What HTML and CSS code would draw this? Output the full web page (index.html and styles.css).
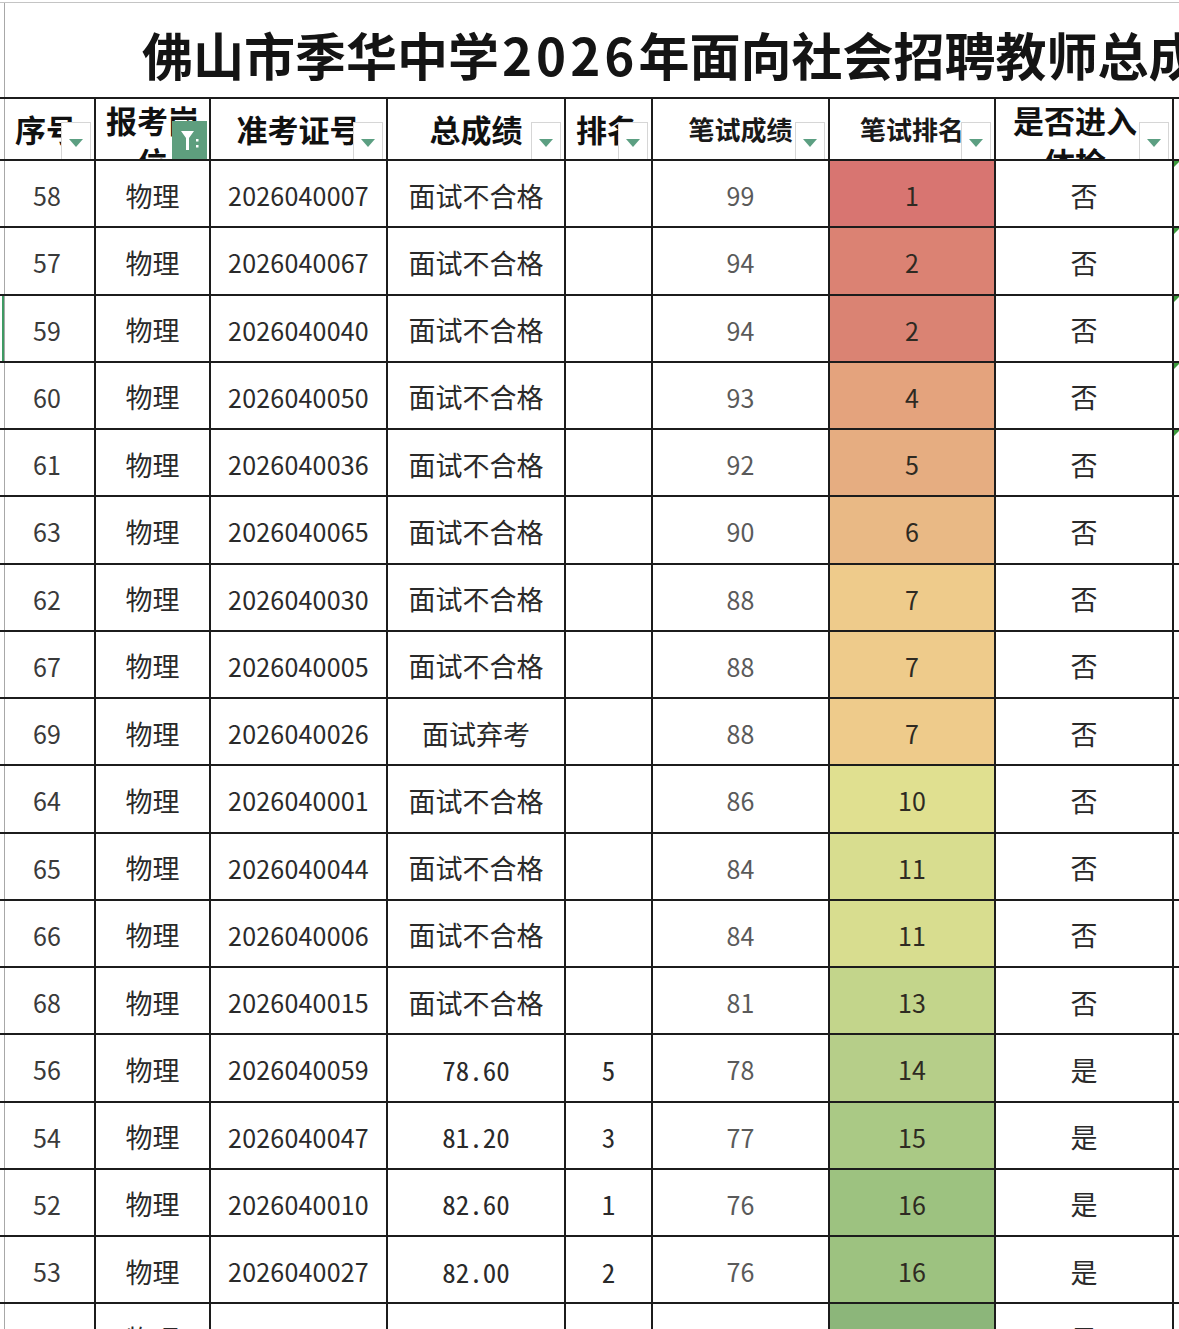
FILE: index.html
```html
<!DOCTYPE html>
<html lang="zh-CN">
<head>
<meta charset="utf-8">
<title>佛山市季华中学2026年面向社会招聘教师总成绩表</title>
<link rel="stylesheet" href="styles.css">
</head>
<body>
<div class="sheet">
  <div class="title-row">
    <div class="title">佛山市季华中学<span class="yr">2026</span>年面向社会招聘教师总成绩表</div>
  </div>
  <div class="grid">
    <div class="hd c1">序号<span class="dd"></span></div>
    <div class="hd top">报考岗位<span class="dd on"><svg width="22" height="28" viewBox="0 0 22 28"><path d="M2 5 H15 L10 12 V24 H7 V12 Z" fill="#fff"/><rect x="17" y="13" width="2.5" height="2.5" fill="#fff"/><rect x="17" y="19" width="2.5" height="2.5" fill="#fff"/></svg></span></div>
    <div class="hd">准考证号<span class="dd"></span></div>
    <div class="hd">总成绩<span class="dd"></span></div>
    <div class="hd hd-left">排名<span class="dd"></span></div>
    <div class="hd sm">笔试成绩<span class="dd"></span></div>
    <div class="hd sm">笔试排名<span class="dd"></span></div>
    <div class="hd top wrap">是否进入体检<span class="dd"></span></div>
    <div class="hd edge"></div>

    <div class="c1 n">58</div><div class="zh">物理</div><div class="id">2026040007</div><div class="zh">面试不合格</div><div></div><div class="n g">99</div><div class="rk" style="background:#d87571">1</div><div class="zh">否</div><div class="edge mark"></div>
    <div class="c1 n">57</div><div class="zh">物理</div><div class="id">2026040067</div><div class="zh">面试不合格</div><div></div><div class="n g">94</div><div class="rk" style="background:#db8273">2</div><div class="zh">否</div><div class="edge mark"></div>
    <div class="c1 n sel">59</div><div class="zh">物理</div><div class="id">2026040040</div><div class="zh">面试不合格</div><div></div><div class="n g">94</div><div class="rk" style="background:#da8373">2</div><div class="zh">否</div><div class="edge mark"></div>
    <div class="c1 n">60</div><div class="zh">物理</div><div class="id">2026040050</div><div class="zh">面试不合格</div><div></div><div class="n g">93</div><div class="rk" style="background:#e4a37d">4</div><div class="zh">否</div><div class="edge mark"></div>
    <div class="c1 n">61</div><div class="zh">物理</div><div class="id">2026040036</div><div class="zh">面试不合格</div><div></div><div class="n g">92</div><div class="rk" style="background:#e6ad81">5</div><div class="zh">否</div><div class="edge mark"></div>
    <div class="c1 n">63</div><div class="zh">物理</div><div class="id">2026040065</div><div class="zh">面试不合格</div><div></div><div class="n g">90</div><div class="rk" style="background:#e9b985">6</div><div class="zh">否</div><div class="edge"></div>
    <div class="c1 n">62</div><div class="zh">物理</div><div class="id">2026040030</div><div class="zh">面试不合格</div><div></div><div class="n g">88</div><div class="rk" style="background:#eecb8b">7</div><div class="zh">否</div><div class="edge"></div>
    <div class="c1 n">67</div><div class="zh">物理</div><div class="id">2026040005</div><div class="zh">面试不合格</div><div></div><div class="n g">88</div><div class="rk" style="background:#eecb8b">7</div><div class="zh">否</div><div class="edge"></div>
    <div class="c1 n">69</div><div class="zh">物理</div><div class="id">2026040026</div><div class="zh">面试弃考</div><div></div><div class="n g">88</div><div class="rk" style="background:#eecb8b">7</div><div class="zh">否</div><div class="edge"></div>
    <div class="c1 n">64</div><div class="zh">物理</div><div class="id">2026040001</div><div class="zh">面试不合格</div><div></div><div class="n g">86</div><div class="rk" style="background:#e0e090">10</div><div class="zh">否</div><div class="edge"></div>
    <div class="c1 n">65</div><div class="zh">物理</div><div class="id">2026040044</div><div class="zh">面试不合格</div><div></div><div class="n g">84</div><div class="rk" style="background:#d8dd8f">11</div><div class="zh">否</div><div class="edge"></div>
    <div class="c1 n">66</div><div class="zh">物理</div><div class="id">2026040006</div><div class="zh">面试不合格</div><div></div><div class="n g">84</div><div class="rk" style="background:#d8dd8f">11</div><div class="zh">否</div><div class="edge"></div>
    <div class="c1 n">68</div><div class="zh">物理</div><div class="id">2026040015</div><div class="zh">面试不合格</div><div></div><div class="n g">81</div><div class="rk" style="background:#c3d58b">13</div><div class="zh">否</div><div class="edge"></div>
    <div class="c1 n">56</div><div class="zh">物理</div><div class="id">2026040059</div><div class="mono">78.60</div><div class="mono">5</div><div class="n g">78</div><div class="rk" style="background:#b6ce89">14</div><div class="zh">是</div><div class="edge"></div>
    <div class="c1 n">54</div><div class="zh">物理</div><div class="id">2026040047</div><div class="mono">81.20</div><div class="mono">3</div><div class="n g">77</div><div class="rk" style="background:#aac985">15</div><div class="zh">是</div><div class="edge"></div>
    <div class="c1 n">52</div><div class="zh">物理</div><div class="id">2026040010</div><div class="mono">82.60</div><div class="mono">1</div><div class="n g">76</div><div class="rk" style="background:#9dc280">16</div><div class="zh">是</div><div class="edge"></div>
    <div class="c1 n">53</div><div class="zh">物理</div><div class="id">2026040027</div><div class="mono">82.00</div><div class="mono">2</div><div class="n g">76</div><div class="rk" style="background:#9dc280">16</div><div class="zh">是</div><div class="edge"></div>
    <div class="c1 n">55</div><div class="zh">物理</div><div class="id">2026040033</div><div class="mono">80.40</div><div class="mono">4</div><div class="n g">75</div><div class="rk" style="background:#8cb67a">18</div><div class="zh">是</div><div class="edge"></div>
  </div>
</div>
</body>
</html>
```

FILE: styles.css
```css
html, body {
  margin: 0;
  padding: 0;
  background: #fff;
  height: 1329px;
  overflow: hidden;
}

.sheet {
  width: 1179px;
  height: 1329px;
  overflow: hidden;
  font-family: "Noto Sans CJK SC", "Noto Sans", sans-serif;
  color: #2a2a2a;
}

.title-row {
  margin-top: 2px;
  height: 95px;
  border-top: 1px solid #c4c4c4;
  box-sizing: border-box;
  background: linear-gradient(to right, #fff 0 4px, #a8a8a8 4px 5px, #fff 5px);
  white-space: nowrap;
  overflow: hidden;
}

.title {
  padding: 20px 0 0 142px;
  font-size: 51px;
  line-height: 62px;
  font-weight: 700;
  color: #141414;
}

.yr {
  letter-spacing: 4px;
  padding-left: 3px;
}

.grid {
  display: grid;
  grid-template-columns: 94px 113px 175px 176px 85px 175px 164px 176px 40px;
  grid-template-rows: 60px repeat(18, 65.25px);
  gap: 2px;
  padding-top: 2px;
  background: #1c1c1c;
  width: 1230px;
}

.grid > div {
  background: #fff;
  display: flex;
  align-items: center;
  justify-content: center;
  overflow: hidden;
  position: relative;
  white-space: nowrap;
  padding-top: 3px;
  box-sizing: border-box;
}

.c1 {
  background: linear-gradient(to right, #fff 0 4px, #a8a8a8 4px 5px, #fff 5px) !important;
}

.c1.sel {
  background: linear-gradient(to right, #fff 0 2px, #3f9a63 2px 4px, #a8a8a8 4px 5px, #fff 5px) !important;
}

.grid > .hd {
  font-size: 31px;
  line-height: 34px;
  font-weight: 700;
  color: #111;
  text-align: center;
  white-space: normal;
  padding: 0 4px;
}

.grid > .hd.c1 {
  justify-content: flex-start;
  padding-left: 15px;
}

.grid > .hd.top {
  align-items: flex-start;
  line-height: 42px;
  padding-top: 0;
}

.grid > .hd.sm {
  font-size: 26px;
  color: #1a1a1a;
}

.grid > .hd.wrap {
  padding: 0 30px 0 12px;
}

.grid > .hd-left {
  justify-content: flex-start;
  padding-left: 10px;
}

.dd {
  position: absolute;
  right: 3px;
  bottom: 0;
  width: 30px;
  height: 37px;
  box-sizing: border-box;
  border: 1px solid #d6d6d6;
  border-bottom: none;
  background: #fff;
  display: flex;
  align-items: center;
  justify-content: center;
  padding-top: 3px;
}

.dd::after {
  content: "";
  width: 0;
  height: 0;
  border-left: 7px solid transparent;
  border-right: 7px solid transparent;
  border-top: 8px solid #5c9f82;
}

.dd.on {
  right: 2px;
  width: 35px;
  height: 38px;
  background: #5e9e7e;
  border: none;
  padding: 0;
}

.dd.on::after {
  display: none;
}

.n {
  font-size: 25px;
  color: #3a3a3a;
}

.n.g {
  color: #5a5a5a;
}

.zh {
  font-size: 27px;
  color: #2a2a2a;
}

.id {
  font-size: 25px;
  color: #2a2a2a;
  letter-spacing: 0.2px;
}

.mono {
  font-family: "Noto Sans Mono CJK SC", "DejaVu Sans Mono", monospace;
  font-size: 27px;
  color: #2a2a2a;
}

.rk {
  font-size: 25px;
  color: #2e2a22;
}

.edge.mark::before {
  content: "";
  position: absolute;
  left: 0;
  top: 0;
  border-top: 6px solid #3c9a3c;
  border-right: 6px solid transparent;
}
```
